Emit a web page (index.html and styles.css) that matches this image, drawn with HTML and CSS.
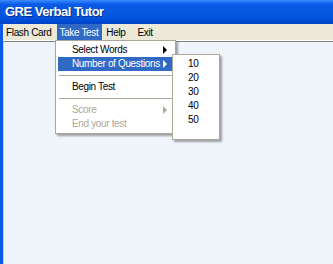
FILE: index.html
```html
<!DOCTYPE html>
<html lang="en">
<head>
    <meta charset="UTF-8">
    <title>GRE Verbal Tutor</title>
    <link rel="stylesheet" href="styles.css">
</head>
<body>
    <div class="window">
        <div class="titlebar">GRE Verbal Tutor</div>
        <div class="frame">
            <div class="menubar">
                <span class="menu-item">Flash Card</span>
                <span class="menu-item active">Take Test</span>
                <span class="menu-item">Help</span>
                <span class="menu-item">Exit</span>
            </div>
            <div class="client"></div>
        </div>
    </div>

    <!-- Take Test dropdown -->
    <div class="dropdown">
        <div class="drop-item has-sub">Select Words</div>
        <div class="drop-item has-sub selected">Number of Questions</div>
        <div class="separator"></div>
        <div class="drop-item">Begin Test</div>
        <div class="separator"></div>
        <div class="drop-item has-sub disabled">Score</div>
        <div class="drop-item disabled">End your test</div>
    </div>

    <!-- Number of Questions submenu -->
    <div class="submenu">
        <div class="drop-item">10</div>
        <div class="drop-item">20</div>
        <div class="drop-item">30</div>
        <div class="drop-item">40</div>
        <div class="drop-item">50</div>
    </div>
</body>
</html>
```

FILE: styles.css
```css
:root {
    --xp-blue: #0a5ae6;
    --menu-bar: #ece9d8;
    --highlight: #316ac5;
    --disabled: #aca899;
    --client: #f0f4fb;
}

* {
    margin: 0;
    padding: 0;
    box-sizing: border-box;
}

body {
    width: 333px;
    height: 264px;
    overflow: hidden;
    font-family: 'Liberation Sans', Arial, sans-serif;
    font-size: 10px;
    letter-spacing: -0.35px;
    color: #000;
    background: var(--xp-blue);
    position: relative;
}

.window {
    height: 264px;
    display: flex;
    flex-direction: column;
}

.titlebar {
    height: 24px;
    padding: 4px 0 0 5px;
    background: linear-gradient(to bottom, #3a8cff 0%, #0a5ae6 18%, #0456e0 70%, #0042c8 100%);
    color: #fff;
    font-weight: bold;
    font-size: 13px;
    letter-spacing: -0.5px;
    text-shadow: 1px 1px 0 #0a2a8a;
}

.frame {
    flex: 1;
    display: flex;
    flex-direction: column;
    padding-left: 3px;
    background: var(--xp-blue);
}

.menubar {
    height: 17px;
    display: flex;
    align-items: stretch;
    background: var(--menu-bar);
    border-bottom: 1px solid #fff;
}

.menu-item {
    display: flex;
    align-items: center;
    padding: 0 4px 0 3px;
}

.menu-item.active {
    background: var(--highlight);
    color: #fff;
    margin-left: 2px;
    padding: 0 4px 0 2px;
}

.menu-item:nth-child(3) {
    margin-left: 1px;
}

.menu-item:nth-child(4) {
    margin-left: 5px;
}

.client {
    flex: 1;
    background: var(--client);
    border-top: 1px solid #808080;
    border-left: 1px solid #d6d3c6;
}

.dropdown,
.submenu {
    position: absolute;
    background: #fff;
    border: 1px solid #aca899;
    box-shadow: 2px 2px 2px rgba(0, 0, 0, 0.35);
}

.dropdown {
    left: 55px;
    top: 40px;
    width: 121px;
    padding: 2px;
}

.submenu {
    left: 172px;
    top: 54px;
    width: 48px;
    height: 86px;
    padding: 2px 0;
}

.drop-item {
    height: 14px;
    line-height: 14px;
    padding-left: 14px;
    position: relative;
    white-space: nowrap;
}

.submenu .drop-item {
    padding-left: 15px;
}

.drop-item.selected {
    background: var(--highlight);
    color: #fff;
}

.drop-item.disabled {
    color: var(--disabled);
}

.has-sub::after {
    content: "";
    position: absolute;
    right: 6px;
    top: 3px;
    border-top: 4px solid transparent;
    border-bottom: 4px solid transparent;
    border-left: 4px solid #000;
}

.has-sub.selected::after {
    border-left-color: #fff;
}

.has-sub.disabled::after {
    border-left-color: var(--disabled);
}

.separator {
    height: 9px;
    margin: 0 1px;
    background: linear-gradient(#aca899, #aca899) center / 100% 1px no-repeat;
}
```
